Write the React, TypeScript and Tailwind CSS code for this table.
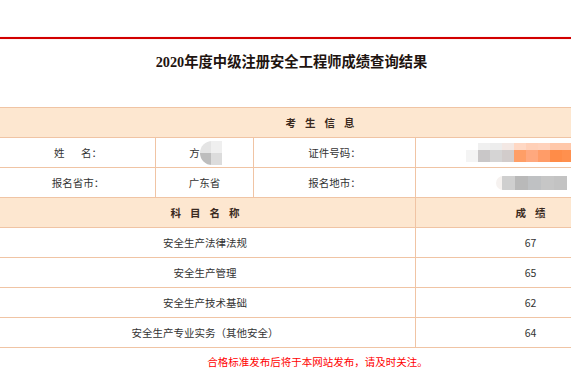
const cell = "border border-[#f0c4a4] h-[30px] p-0 text-center align-middle";
const head = "border border-[#f0c4a4] h-[30px] p-0 text-center align-middle bg-[#fde7d0] font-bold text-[#3a2a20]";

const scores = [
  { name: "安全生产法律法规", score: "67" },
  { name: "安全生产管理", score: "65" },
  { name: "安全生产技术基础", score: "62" },
  { name: "安全生产专业实务（其他安全）", score: "64" },
];

const App = () => {
  return (
    <div
      className="w-[571px] h-[381px] overflow-hidden bg-white text-[#333] text-[10.5px]"
      style={{ fontFamily: '"Noto Sans CJK SC", "Noto Sans", sans-serif' }}
    >
      <div className="h-[37px]"></div>
      <div className="h-[2px] bg-[#d20000] shadow-[0_0_1px_#f08080]"></div>

      <div className="h-[68px] flex justify-center pl-[12px] pt-[14px]">
        <h1
          className="text-[14.3px] leading-[18px] font-bold text-[#1e1410]"
          style={{ fontFamily: '"Liberation Serif", "Noto Sans CJK SC", serif' }}
        >
          2020年度中级注册安全工程师成绩查询结果
        </h1>
      </div>

      <table className="ml-[-6px] w-[651px] border-collapse table-fixed">
        <colgroup>
          <col className="w-[161px]" />
          <col className="w-[98px]" />
          <col className="w-[162px]" />
          <col className="w-[230px]" />
        </colgroup>
        <tbody>
          <tr>
            <td colSpan={4} className={head}>
              <span className="tracking-[9px] pl-[9px]">考生信息</span>
            </td>
          </tr>
          <tr>
            <td className={cell}>
              <span className="pl-[6px]">姓&nbsp;&nbsp;&nbsp;&nbsp;&nbsp;&nbsp;&nbsp;名：</span>
            </td>
            <td className={cell}>
              <div className="flex items-center justify-center pl-[2px]">
                <span>方</span>
                <div className="flex flex-col w-[22px] h-[24px] rounded-l-full overflow-hidden blur-[0.5px]">
                  <div className="flex h-[12px]">
                    <div className="w-[11px] bg-[#e4e4e4]"></div>
                    <div className="w-[11px] bg-[#efefef]"></div>
                  </div>
                  <div className="flex h-[12px]">
                    <div className="w-[11px] bg-[#bdbdbd]"></div>
                    <div className="w-[11px] bg-[#dcdcdc]"></div>
                  </div>
                </div>
              </div>
            </td>
            <td className={cell}>证件号码：</td>
            <td className={cell}>
              <div className="flex flex-col pl-[50px] blur-[0.6px]">
                <div className="flex h-[7px] pl-[12px]">
                  <div className="w-[12px] bg-[#f0f0f0]"></div>
                  <div className="w-[12px] bg-[#ededed]"></div>
                  <div className="w-[12px] bg-[#f3e8e4]"></div>
                  <div className="w-[12px] bg-[#ffd8c4]"></div>
                  <div className="w-[12px] bg-[#ffd0b8]"></div>
                  <div className="w-[12px] bg-[#ffd2bc]"></div>
                  <div className="w-[12px] bg-[#ffc8aa]"></div>
                  <div className="w-[12px] bg-[#ffc8aa]"></div>
                </div>
                <div className="flex h-[12px]">
                  <div className="w-[12px] bg-[#f4f4f4]"></div>
                  <div className="w-[12px] bg-[#c9c7c8]"></div>
                  <div className="w-[12px] bg-[#d5d4d4]"></div>
                  <div className="w-[12px] bg-[#d2cccb]"></div>
                  <div className="w-[12px] bg-[#ff9e66]"></div>
                  <div className="w-[12px] bg-[#ffa87e]"></div>
                  <div className="w-[12px] bg-[#ff9c68]"></div>
                  <div className="w-[12px] bg-[#ff8c48]"></div>
                  <div className="w-[12px] bg-[#ff904e]"></div>
                </div>
              </div>
            </td>
          </tr>
          <tr>
            <td className={cell}>
              <span className="pl-[6px]">报名省市：</span>
            </td>
            <td className={cell}>广东省</td>
            <td className={cell}>报名地市：</td>
            <td className={cell}>
              <div className="flex pl-[80px] blur-[0.6px]">
                <div className="flex h-[14px] rounded-l-full overflow-hidden bg-[#f6f2f0] pl-[6px]">
                  <div className="w-[13px] bg-[#cfcfcf]"></div>
                  <div className="w-[13px] bg-[#b9b9b9]"></div>
                  <div className="w-[13px] bg-[#bfc1c3]"></div>
                  <div className="w-[13px] bg-[#c6c6c6]"></div>
                  <div className="w-[13px] bg-[#c3c3c3]"></div>
                </div>
              </div>
            </td>
          </tr>
          <tr>
            <td colSpan={3} className={head}>
              <span className="tracking-[9px] pl-[9px]">科目名称</span>
            </td>
            <td className={head}>
              <span className="tracking-[9px] pl-[9px]">成绩</span>
            </td>
          </tr>
          {scores.map((s) => (
            <tr key={s.name}>
              <td colSpan={3} className={cell}>
                {s.name}
              </td>
              <td className={cell}>{s.score}</td>
            </tr>
          ))}
        </tbody>
      </table>

      <div className="ml-[-6px] w-[651px] text-center text-[#ff0000] pt-[6px] pr-[4px]">
        合格标准发布后将于本网站发布，请及时关注。
      </div>
    </div>
  );
};

export default App;
